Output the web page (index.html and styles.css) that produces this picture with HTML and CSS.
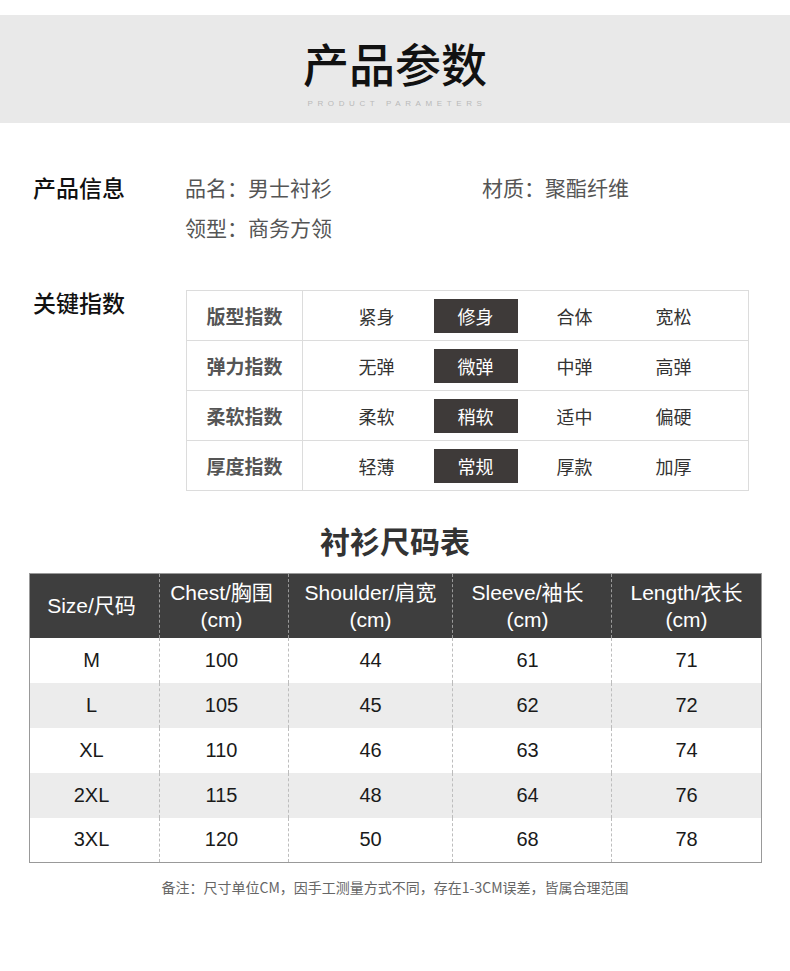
FILE: index.html
```html
<!DOCTYPE html>
<html lang="zh-CN">
<head>
<meta charset="utf-8">
<title>产品参数</title>
<link rel="stylesheet" href="styles.css">
</head>
<body>
<div class="page">
  <header class="banner">
    <h1 class="banner-title">产品参数</h1>
    <div class="banner-sub">PRODUCT PARAMETERS</div>
  </header>

  <section class="info">
    <div class="sec-label">产品信息</div>
    <div class="info-values">
      <div class="info-item">品名：男士衬衫</div>
      <div class="info-item">材质：聚酯纤维</div>
      <div class="info-item">领型：商务方领</div>
    </div>
  </section>

  <section class="keys">
    <div class="sec-label key-label">关键指数</div>
    <div class="key-table">
      <div class="key-row">
        <div class="key-name">版型指数</div>
        <div class="key-opts">
          <span class="opt">紧身</span><span class="opt"><span class="opt-on">修身</span></span><span class="opt">合体</span><span class="opt">宽松</span>
        </div>
      </div>
      <div class="key-row">
        <div class="key-name">弹力指数</div>
        <div class="key-opts">
          <span class="opt">无弹</span><span class="opt"><span class="opt-on">微弹</span></span><span class="opt">中弹</span><span class="opt">高弹</span>
        </div>
      </div>
      <div class="key-row">
        <div class="key-name">柔软指数</div>
        <div class="key-opts">
          <span class="opt">柔软</span><span class="opt"><span class="opt-on">稍软</span></span><span class="opt">适中</span><span class="opt">偏硬</span>
        </div>
      </div>
      <div class="key-row">
        <div class="key-name">厚度指数</div>
        <div class="key-opts">
          <span class="opt">轻薄</span><span class="opt"><span class="opt-on">常规</span></span><span class="opt">厚款</span><span class="opt">加厚</span>
        </div>
      </div>
    </div>
  </section>

  <h2 class="size-title">衬衫尺码表</h2>

  <table class="size-table">
    <colgroup>
      <col class="c1"><col class="c2"><col class="c3"><col class="c4"><col class="c5">
    </colgroup>
    <thead>
      <tr>
        <th class="k1">Size/尺码</th>
        <th class="k2">Chest/胸围<br>(cm)</th>
        <th class="k3">Shoulder/肩宽<br>(cm)</th>
        <th class="k4">Sleeve/袖长<br>(cm)</th>
        <th class="k5">Length/衣长<br>(cm)</th>
      </tr>
    </thead>
    <tbody>
      <tr><td class="k1">M</td><td class="k2">100</td><td class="k3">44</td><td class="k4">61</td><td class="k5">71</td></tr>
      <tr class="alt"><td class="k1">L</td><td class="k2">105</td><td class="k3">45</td><td class="k4">62</td><td class="k5">72</td></tr>
      <tr><td class="k1">XL</td><td class="k2">110</td><td class="k3">46</td><td class="k4">63</td><td class="k5">74</td></tr>
      <tr class="alt"><td class="k1">2XL</td><td class="k2">115</td><td class="k3">48</td><td class="k4">64</td><td class="k5">76</td></tr>
      <tr><td class="k1">3XL</td><td class="k2">120</td><td class="k3">50</td><td class="k4">68</td><td class="k5">78</td></tr>
    </tbody>
  </table>

  <p class="note">备注：尺寸单位CM，因手工测量方式不同，存在1-3CM误差，皆属合理范围</p>
</div>
</body>
</html>
```

FILE: styles.css
```css
* { box-sizing: border-box; }

html, body {
  margin: 0;
  padding: 0;
  background: #ffffff;
}

body {
  font-family: "Noto Sans CJK SC", "Noto Sans", sans-serif;
  color: #222;
}

.page {
  width: 790px;
  padding-top: 15px;
}

/* ---------- banner ---------- */
.banner {
  background: #e9e9e9;
  height: 108px;
  display: flex;
  flex-direction: column;
  align-items: center;
}

.banner-title {
  margin: 19px 0 0;
  font-size: 46px;
  line-height: 56px;
  font-weight: 500;
  color: #111;
  letter-spacing: 0;
}

.banner-sub {
  margin-top: 9px;
  font-family: "Liberation Sans", sans-serif;
  font-size: 8px;
  line-height: 10px;
  letter-spacing: 4.6px;
  color: #b9b9b9;
  padding-left: 4px;
}

/* ---------- info ---------- */
.sec-label {
  width: 152px;
  flex: none;
  font-size: 23px;
  line-height: 40px;
  font-weight: 500;
  color: #111;
}

.info {
  display: flex;
  margin-top: 44px;
  padding-left: 33px;
}

.info-values {
  display: grid;
  grid-template-columns: 297px auto;
}

.info-item {
  font-size: 21px;
  line-height: 40px;
  color: #555;
}

/* ---------- key table ---------- */
.keys {
  display: flex;
  margin-top: 43px;
  padding-left: 33px;
}

.key-label {
  width: 153px;
  line-height: 24px;
}

.key-table {
  width: 563px;
  border: 1px solid #dcdcdc;
}

.key-row {
  display: flex;
  height: 50px;
  border-top: 1px solid #dcdcdc;
}

.key-row:first-child {
  border-top: none;
  height: 49px;
}

.key-name {
  width: 116px;
  flex: none;
  border-right: 1px solid #dcdcdc;
  display: flex;
  align-items: center;
  justify-content: center;
  font-size: 19px;
  font-weight: 700;
  color: #555;
}

.key-opts {
  display: grid;
  grid-template-columns: repeat(4, 99px);
  padding-left: 24px;
  align-items: center;
}

.opt {
  display: flex;
  justify-content: center;
  align-items: center;
  font-size: 18px;
  color: #333;
}

.opt-on {
  display: flex;
  justify-content: center;
  align-items: center;
  width: 84px;
  height: 34px;
  background: #3e3a39;
  color: #fff;
  margin-top: 1px;
}

/* ---------- size table ---------- */
.size-title {
  margin: 29px 0 13px;
  text-align: center;
  font-size: 30px;
  line-height: 40px;
  font-weight: 700;
  color: #333;
}

.size-table {
  margin-left: 29px;
  width: 732px;
  border-collapse: collapse;
  table-layout: fixed;
  border: 1px solid #999;
  font-family: "Liberation Sans", "Noto Sans CJK SC", sans-serif;
}

.c1 { width: 130px; }
.c2 { width: 129px; }
.c3 { width: 164px; }
.c4 { width: 159px; }
.c5 { width: 150px; }

.size-table th {
  height: 64px;
  background: #3e3e3e;
  color: #fff;
  font-weight: 400;
  font-size: 21px;
  line-height: 27px;
  padding: 0;
  text-align: center;
  vertical-align: middle;
  border-left: 1px dashed #9a9a9a;
}

.size-table td {
  height: 45px;
  padding: 0;
  text-align: center;
  vertical-align: middle;
  font-size: 20px;
  color: #1a1a1a;
  border-left: 1px dashed #bdbdbd;
}

.size-table .k1 { padding-right: 6px; }
.size-table .k2 { padding-right: 5px; }
.size-table .k4 { padding-right: 9px; }

.size-table th:first-child,
.size-table td:first-child {
  border-left: none;
}

.size-table tr.alt td {
  background: #ececec;
}

/* ---------- note ---------- */
.note {
  margin: 14px 0 0;
  text-align: center;
  font-size: 14px;
  line-height: 20px;
  color: #666;
}
```
